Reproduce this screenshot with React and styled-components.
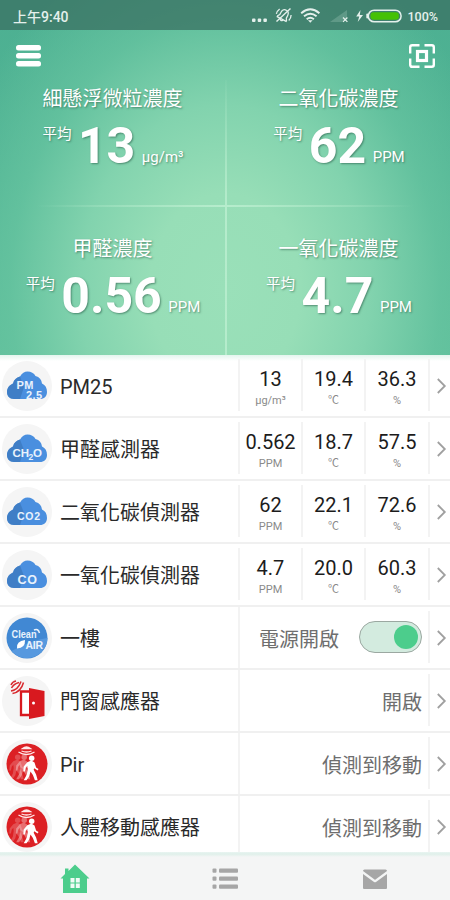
import React from "react"
import styled, { createGlobalStyle } from "styled-components"

const GlobalStyle = createGlobalStyle`
    * {
        box-sizing: border-box;
    }
    body {
        margin: 0;
        background: #fff;
        font-family: Roboto, "Noto Sans CJK TC", sans-serif;
    }
`

const Screen = styled.div`
    width: 450px;
    height: 900px;
    overflow: hidden;
    display: flex;
    flex-direction: column;
    background: #fff;
`

const Hero = styled.header`
    height: 355px;
    flex: none;
    color: #fff;
    background:
        radial-gradient(ellipse 290px 370px at 225px 290px, #9ae0b9 0%, #97deb7 26%, #82d3ae 50%, rgba(104, 197, 161, 0.75) 74%, rgba(77, 178, 147, 0) 100%),
        linear-gradient(180deg, #4db092 0%, #4fb393 50%, #5abc98 100%);
`

const StatusBar = styled.div`
    height: 30px;
    padding: 2px 12px 0 13px;
    display: flex;
    align-items: center;
    justify-content: space-between;
    background: rgba(57, 112, 98, 0.75);
    color: #e4f0ec;
    font-size: 14px;
    font-weight: 500;
`

const StatusIcons = styled.div`
    display: flex;
    align-items: center;
    gap: 5.5px;
    font-size: 12.5px;
`

const AppBar = styled.div`
    height: 50px;
    padding: 1px 15px 0 16px;
    display: flex;
    align-items: center;
    justify-content: space-between;
`

const Summary = styled.div`
    display: grid;
    grid-template-columns: 225px 2px 223px;
    grid-template-rows: 125px 2px 148px;
`

const Card = styled.section`
    display: flex;
    flex-direction: column;
    align-items: center;
    justify-content: flex-end;
    padding-bottom: 34px;
    text-shadow: 1px 1px 2px rgba(40, 90, 70, 0.6);
`

const CardTitle = styled.h2`
    margin: 0 0 10px;
    font-size: 20px;
    font-weight: 400;
    line-height: 24px;
`

const Reading = styled.div`
    height: 50px;
    padding-left: 1px;
    display: flex;
    align-items: flex-end;
    gap: 6.5px;
`

const Average = styled.span`
    align-self: flex-start;
    font-size: 14.5px;
    line-height: 28px;
`

const BigNumber = styled.span`
    font-size: 50px;
    font-weight: 700;
    line-height: 50px;
`

const BigUnit = styled.span`
    font-size: 15px;
    line-height: 17px;
    padding-bottom: 5px;
`

const VLine = styled.div`
    background: linear-gradient(${(p) => (p.$fade ? "rgba(190, 240, 210, 0.05), rgba(190, 240, 210, 0.75)" : "rgba(190, 240, 210, 0.75), rgba(190, 240, 210, 0.75)")});
`

const HLine = styled.div`
    grid-column: 1 / 4;
    background: linear-gradient(90deg, rgba(190, 240, 210, 0) 8%, rgba(190, 240, 210, 0.8) 50%, rgba(190, 240, 210, 0) 92%);
`

const List = styled.ul`
    flex: 1;
    min-height: 0;
    margin: 0;
    padding: 0;
    overflow: hidden;
    list-style: none;
    background: linear-gradient(#e4f5ee, #fff 6px);
`

const Row = styled.li`
    height: 63px;
    display: flex;
    border-bottom: 2px solid #f0f0f0;
`

const IconBox = styled.div`
    width: 54px;
    padding: 6px 0 0 2px;
    flex: none;
`

const Name = styled.div`
    width: 184px;
    padding-left: 6px;
    font-size: 20px;
    line-height: 64px;
    color: #2a2a2a;
    white-space: nowrap;
`

const Metric = styled.div`
    width: ${(p) => (p.$last ? 64 : 63)}px;
    margin: 4px 0 5px;
    padding-top: 8px;
    border-left: 2px solid #f3f3f3;
    text-align: center;
`

const Value = styled.div`
    font-size: 20px;
    line-height: 24px;
    color: #1c1c1c;
`

const Unit = styled.div`
    margin-top: 3px;
    font-size: 11px;
    line-height: 14px;
    color: #8a8a8a;
`

const State = styled.div`
    width: 190px;
    padding: 2px 6px 0 0;
    display: flex;
    align-items: center;
    justify-content: flex-end;
    gap: 20px;
    border-left: 2px solid #f3f3f3;
    font-size: 20px;
    color: #6e6e6e;
`

const Toggle = styled.div`
    width: 63px;
    height: 32px;
    margin-top: -3px;
    padding: 3px;
    display: flex;
    justify-content: flex-end;
    border: 1.5px solid #9ba8a1;
    border-radius: 16px;
    background: #d3ebdf;

    &::after {
        content: "";
        width: 24px;
        height: 24px;
        border-radius: 50%;
        background: #4ccd8c;
    }
`

const Arrow = styled.div`
    flex: 1;
    margin: 4px 0 5px;
    padding: 2px 0 0 7px;
    display: flex;
    align-items: center;
    border-left: 2px solid #f3f3f3;
`

const NavBar = styled.nav`
    height: 48px;
    flex: none;
    display: grid;
    grid-template-columns: repeat(3, 1fr);
    justify-items: center;
    align-items: center;
    padding-top: 5px;
    background: linear-gradient(#e9f5f1, #dff0ea 2px, #f4f5f5 5px);
`

const Svg = styled.svg`
    display: block;
    flex: none;
    overflow: visible;
`

const SvgText = styled.text`
    font-family: "Liberation Sans", Arial, sans-serif;
    font-weight: 700;
    fill: #e9f2fc;
`

const StatusGlyphs = () => (
    <Svg width="150" height="20" viewBox="0 0 150 20" fill="none" stroke="#e4f0ec">
        <g fill="#e4f0ec" stroke="none">
            <rect x="0" y="12.5" width="3.5" height="3.5" rx="1" />
            <rect x="5.7" y="12.5" width="3.5" height="3.5" rx="1" />
            <rect x="11.4" y="12.5" width="3.5" height="3.5" rx="1" />
        </g>
        {/* muted bell */}
        <g transform="translate(31.5 9.5) rotate(28)" strokeWidth="1.3">
            <path d="M-5 4V3L-3.7 1V-2C-3.7-4.7-2-6 0-6S3.7-4.7 3.7-2V1L5 3V4ZM-1.7 4.3Q0 7 1.7 4.3M-6.5-4Q-8-1-7 2M6.5-4Q8-1 7 2" />
        </g>
        <path d="M38.5 2.5L24.5 15.5" strokeWidth="1.4" />
        <g strokeWidth="1.9">
            <path d="M49.2 7.2Q58.3-0.6 67.4 7.2" />
            <path d="M52 10.3Q58.3 5 64.6 10.3" />
            <path d="M54.7 13.2Q58.3 10.3 61.9 13.2" />
        </g>
        <path d="M56 14.2h4.6l-2.3 2.5z" fill="#e4f0ec" stroke="none" />
        <path d="M78 16L95 4V11L90 16Z" fill="#6aa08f" stroke="none" opacity=".75" />
        <path d="M91 11.5l4.4 4.4M95.4 11.5L91 15.9" strokeWidth="1.3" />
        <path d="M108.5 4l-4.3 6.5h3L105.7 16l5.3-7h-3.2z" fill="#e4f0ec" stroke="none" />
        <path d="M115.3 8.5v3" strokeWidth="2" strokeLinecap="round" />
        <rect x="116.3" y="4.2" width="32.8" height="11.6" rx="5.8" strokeWidth="1.5" />
        <rect x="118.5" y="6.2" width="28.4" height="7.6" rx="3.2" fill="#45c106" stroke="none" />
    </Svg>
)

const MenuIcon = () => (
    <Svg width="25" height="22" viewBox="0 0 25 22" fill="#fff">
        <rect width="25" height="5.6" rx="2.5" />
        <rect y="8" width="25" height="5.6" rx="2.5" />
        <rect y="16" width="25" height="5.6" rx="2.5" />
    </Svg>
)

const ScanIcon = () => (
    <Svg width="26" height="24" viewBox="0 0 26 24" fill="none" stroke="#fff" strokeWidth="2.4">
        <path d="M1.2 9.5V3.2q0-2 2-2H10.5M15.5 1.2H22.8q2 0 2 2V9.5M24.8 14.5V20.8q0 2-2 2H15.5M10.5 22.8H3.2q-2 0-2-2V14.5" />
        <rect x="8.5" y="7.5" width="9" height="9" strokeWidth="3.2" />
    </Svg>
)

const CloudIcon = ({ children }) => (
    <Svg width="50" height="50" viewBox="0 0 50 50">
        <circle cx="25" cy="25" r="25" fill="#f5f5f5" />
        <path d="M12 38C7.5 38 5 35 5 31C5 27 7.5 24 11 22.5C12 18.500 14.500 16.500 18 15.500C20 12 22.500 10.500 25.500 10.500C29 10.500 32 12 33.500 15C37.500 16 39.500 18.500 40 22.500C43.500 24 45 27 45 31C45 35.500 42 38 38 38Z" fill="#4a8fdf" />
        <path d="M12 38C7.5 38 5 35 5 31C5 27 7.5 24 11 22.5C12 18.500 14.500 16.500 18 15.500L22 26L18 38Z" fill="#3c78bd" opacity=".75" />
        {children}
    </Svg>
)

const PmIcon = () => (
    <CloudIcon>
        <SvgText x="14.5" y="27.5" fontSize="11" textLength="17">PM</SvgText>
        <SvgText x="24" y="37.5" fontSize="11" textLength="16">2.5</SvgText>
    </CloudIcon>
)

const Ch2oIcon = () => (
    <CloudIcon>
        <SvgText x="10.5" y="33" fontSize="11.5">CH</SvgText>
        <SvgText x="26.5" y="35.5" fontSize="8.5">2</SvgText>
        <SvgText x="31" y="33" fontSize="11.5">O</SvgText>
    </CloudIcon>
)

const Co2Icon = () => (
    <CloudIcon>
        <SvgText x="15" y="32.5" fontSize="10.5" textLength="23">CO2</SvgText>
    </CloudIcon>
)

const CoIcon = () => (
    <CloudIcon>
        <SvgText x="15.5" y="33.5" fontSize="12.5" textLength="19.5">CO</SvgText>
    </CloudIcon>
)

const CleanAirIcon = () => (
    <Svg width="50" height="50" viewBox="0 0 50 50">
        <circle cx="25" cy="25" r="25" fill="#f5f5f5" />
        <circle cx="25" cy="25" r="20.5" fill="#4188d3" />
        <path d="M9.5 38A20.5 20.5 0 0 0 45.5 25Q30 27 9.5 38Z" fill="#5799df" />
        <SvgText x="9.5" y="24.5" fontSize="10.5" textLength="25" lengthAdjust="spacingAndGlyphs">Clean</SvgText>
        <path d="M32 17q4-2 5.5 3" fill="none" stroke="#e9f2fc" strokeWidth="1.5" />
        <path d="M15 35.5Q14 28 23 27Q23.5 35 15 35.5Z" fill="#fff" />
        <SvgText x="23.5" y="35.5" fontSize="10.5" textLength="17.5">AIR</SvgText>
    </Svg>
)

const DoorIcon = () => (
    <Svg width="50" height="50" viewBox="0 0 50 50">
        <circle cx="25" cy="25" r="25" fill="#f5f5f5" />
        <path d="M19 15.5H31V39H19Z" fill="#fff" stroke="#d8191f" strokeWidth="2.3" />
        <path d="M27 12L42.5 15V40L27 43Z" fill="#d8191f" />
        <circle cx="31.5" cy="27" r="1.5" fill="#fff" />
        <g fill="none" stroke="#d8292e" strokeWidth="1.5">
            <path d="M9 9Q10.5 5.5 14 5" />
            <path d="M9.500 12Q11.500 8 17 6.500" />
            <path d="M9 15Q16 14 19 5.500" />
            <path d="M10.500 17.500Q19 16 21.500 6.500" />
        </g>
    </Svg>
)

const walker = "M1-10.5L5-8L7-2L10 0L9 2L4.500-1L4 1L7 7L9 14H5.500L3 7.500L0 3L-1.500 9L-5 14H-8.500L-4.500 7L-3.500 0L-4-4L-6-1.500L-7 3H-9L-8.500-3L-4-8.500Z"

const Walker = ({ x, y, opacity }) => (
    <g transform={`translate(${x} ${y}) scale(.8)`} opacity={opacity}>
        <circle cx="1.5" cy="-13.5" r="3.4" />
        <path d={walker} />
    </g>
)

const MotionIcon = () => (
    <Svg width="50" height="50" viewBox="0 0 50 50">
        <circle cx="25" cy="25" r="25" fill="#f5f5f5" />
        <circle cx="25" cy="25" r="20.5" fill="#dc2024" />
        <g fill="#fff">
            <Walker x={14.5} y={29} opacity={0.2} />
            <Walker x={21} y={29} opacity={0.35} />
            <Walker x={28.5} y={30} opacity={1} />
        </g>
        <g fill="none" stroke="#ffe9e9" strokeWidth="1.3">
            <path d="M20.5 9.5Q24.5 6.5 28.5 9.5Z" />
            <path d="M19.5 12Q24.5 14 29.5 12" />
            <path d="M16.5 13Q24.5 18 32.5 13" />
        </g>
    </Svg>
)

const Chevron = () => (
    <Svg width="9" height="16" viewBox="0 0 9 16" fill="none" stroke="#a0a0a0" strokeWidth="1.8">
        <path d="M0.8 1L7.8 8L0.8 15" />
    </Svg>
)

const HomeIcon = () => (
    <Svg width="30" height="30" viewBox="0 0 30 30">
        <path d="M15 0.5L29.5 14.5H27V29H3V14.5H0.5L5 10V4.5H8.5V7Z" fill="#4ccd8c" />
        <path d="M10.5 14h4v4.5h-4zM15.8 14h4v4.5h-4zM10.5 19.5h4V24h-4zM15.8 19.5h4V24h-4z" fill="#f1fbf6" />
    </Svg>
)

const ListIcon = () => (
    <Svg width="26" height="26" viewBox="0 0 26 26" fill="#a6a6a6">
        {[2.5, 10.5, 18.5].map((y) => (
            <g key={y}>
                <rect x="0.5" y={y} width="4" height="4.2" rx="1" />
                <rect x="7" y={y} width="19" height="4.2" rx="1" />
            </g>
        ))}
    </Svg>
)

const MailIcon = () => (
    <Svg width="26" height="26" viewBox="0 0 26 26" fill="#a6a6a6">
        <path d="M1 5Q1 3.5 2.5 3.5H23.5Q25 3.5 25 5L13.5 13.5Q13 13.9 12.5 13.5Z" />
        <path d="M1 8L12 16Q13 16.7 14 16L25 8V22Q25 23 24 23H2Q1 23 1 22Z" />
    </Svg>
)

const sensors = [
    { name: "PM25", icon: PmIcon, metrics: [["13", "µg/m³"], ["19.4", "℃"], ["36.3", "%"]] },
    { name: "甲醛感測器", icon: Ch2oIcon, metrics: [["0.562", "PPM"], ["18.7", "℃"], ["57.5", "%"]] },
    { name: "二氧化碳偵測器", icon: Co2Icon, metrics: [["62", "PPM"], ["22.1", "℃"], ["72.6", "%"]] },
    { name: "一氧化碳偵測器", icon: CoIcon, metrics: [["4.7", "PPM"], ["20.0", "℃"], ["60.3", "%"]] },
    { name: "一樓", icon: CleanAirIcon, state: "電源開啟", toggle: true },
    { name: "門窗感應器", icon: DoorIcon, state: "開啟" },
    { name: "Pir", icon: MotionIcon, state: "偵測到移動" },
    { name: "人體移動感應器", icon: MotionIcon, state: "偵測到移動" },
]

const SummaryCard = ({ title, value, unit }) => (
    <Card>
        <CardTitle>{title}</CardTitle>
        <Reading>
            <Average>平均</Average>
            <BigNumber>{value}</BigNumber>
            <BigUnit>{unit}</BigUnit>
        </Reading>
    </Card>
)

const SensorRow = ({ name, icon: Icon, metrics, state, toggle }) => (
    <Row>
        <IconBox><Icon /></IconBox>
        <Name>{name}</Name>
        {metrics && metrics.map(([value, unit], i) => (
            <Metric key={unit} $last={i === metrics.length - 1}>
                <Value>{value}</Value>
                <Unit>{unit}</Unit>
            </Metric>
        ))}
        {state && (
            <State>
                {state}
                {toggle && <Toggle />}
            </State>
        )}
        <Arrow><Chevron /></Arrow>
    </Row>
)

const App = () => {
    return (
        <Screen>
            <GlobalStyle />
            <Hero>
                <StatusBar>
                    <span>上午9:40</span>
                    <StatusIcons>
                        <StatusGlyphs />
                        <span>100%</span>
                    </StatusIcons>
                </StatusBar>
                <AppBar>
                    <MenuIcon />
                    <ScanIcon />
                </AppBar>
                <Summary>
                    <SummaryCard title="細懸浮微粒濃度" value="13" unit="µg/m³" />
                    <VLine $fade />
                    <SummaryCard title="二氧化碳濃度" value="62" unit="PPM" />
                    <HLine />
                    <SummaryCard title="甲醛濃度" value="0.56" unit="PPM" />
                    <VLine />
                    <SummaryCard title="一氧化碳濃度" value="4.7" unit="PPM" />
                </Summary>
            </Hero>
            <List>
                {sensors.map((s) => (
                    <SensorRow key={s.name} {...s} />
                ))}
            </List>
            <NavBar>
                <HomeIcon />
                <ListIcon />
                <MailIcon />
            </NavBar>
        </Screen>
    )
}

export default App
